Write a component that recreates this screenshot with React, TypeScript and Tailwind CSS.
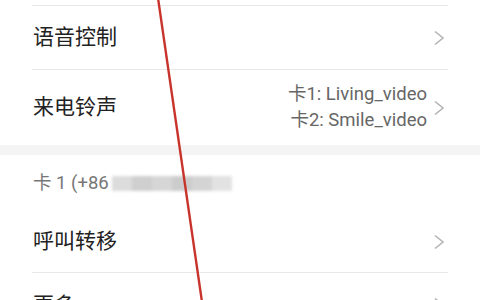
import React from "react";

const font = { fontFamily: 'Roboto, "Noto Sans CJK SC", "Noto Sans", sans-serif' };

function Chevron() {
  return (
    <svg width="12" height="16" viewBox="0 0 12 16" className="shrink-0 mr-[3px]">
      <polyline points="2,1.5 10,8 2,14.5" fill="none" stroke="#b4b4b4" strokeWidth="1.6" strokeLinejoin="miter" />
    </svg>
  );
}

function Row({ label, h, border = true, right }: { label: string; h: string; border?: boolean; right?: React.ReactNode }) {
  return (
    <div className={`${h} flex items-center mx-[32px] ${border ? "border-b border-[#e8e8e8]" : ""}`}>
      <span className="text-[21px] text-[#222] leading-none tracking-[0px] pl-[1px]">{label}</span>
      <div className="flex-1" />
      {right}
      <Chevron />
    </div>
  );
}

export default function App() {
  return (
    <div className="relative w-[480px] h-[300px] overflow-hidden bg-white" style={font}>
      <div className="h-[6px] mx-[32px] border-b border-[#e8e8e8]" />
      <Row label="语音控制" h="h-[64px]" />
      <Row
        label="来电铃声"
        h="h-[75px]"
        border={false}
        right={
          <div className="flex flex-col items-end text-[18.5px] leading-[26px] text-[#666] mr-[6px] -mt-[1px]">
            <span>卡1: Living_video</span>
            <span>卡2: Smile_video</span>
          </div>
        }
      />
      <div className="h-[10px] bg-[#f4f4f4]" />
      <div className="h-[56px] flex items-center px-[33px]">
        <span className="text-[18.5px] text-[#777] leading-none">卡 1 (+86</span>
        <div className="ml-[3px] h-[15px] w-[120px] flex blur-[1.5px]">
          <div className="flex-1 bg-[#dcdcdc]" />
          <div className="flex-1 bg-[#cfcfcf]" />
          <div className="flex-1 bg-[#d6d6d6]" />
          <div className="flex-1 bg-[#cccccc]" />
          <div className="flex-1 bg-[#d4d4d4]" />
          <div className="flex-1 bg-[#e2e2e2]" />
        </div>
      </div>
      <Row label="呼叫转移" h="h-[62px]" />
      <Row label="更多" h="h-[64px]" border={false} />
      <svg className="absolute inset-0 pointer-events-none" width="480" height="300">
        <line x1="158" y1="-2" x2="202" y2="302" stroke="#c8342c" strokeWidth="2.4" />
      </svg>
    </div>
  );
}
